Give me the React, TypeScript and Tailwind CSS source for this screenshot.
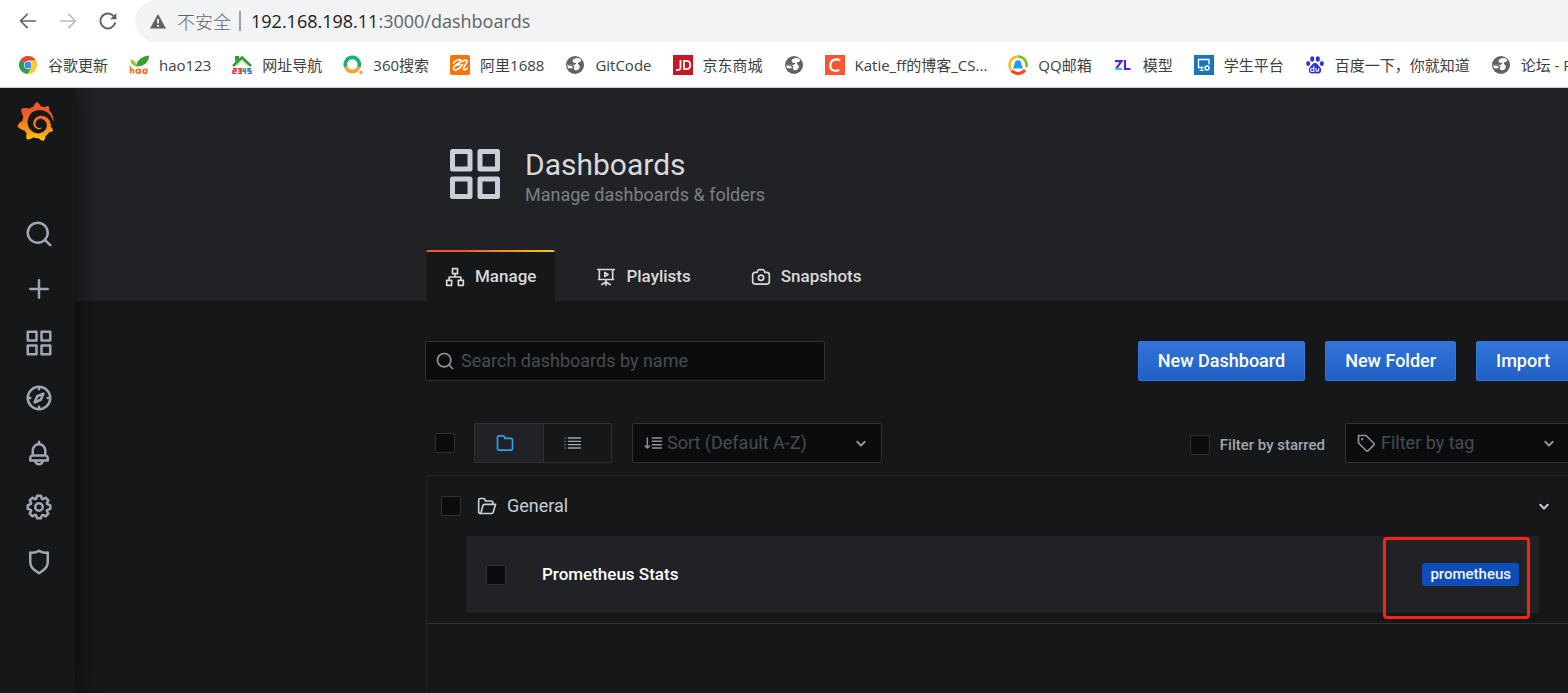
import type { ReactNode } from 'react';
import { SiGrafana } from 'react-icons/si';

type IconProps = { className?: string; children: ReactNode };

function Glyph({ className = '', children }: IconProps) {
  return (
    <svg viewBox="0 0 24 24" className={`shrink-0 ${className}`} fill="currentColor" aria-hidden="true">
      {children}
    </svg>
  );
}

function Line({ className = '', children }: IconProps) {
  return (
    <svg
      viewBox="0 0 24 24"
      className={`shrink-0 ${className}`}
      fill="none"
      stroke="currentColor"
      strokeWidth="2"
      strokeLinecap="round"
      strokeLinejoin="round"
      aria-hidden="true"
    >
      {children}
    </svg>
  );
}

const paths = {
  search:
    'M21.71,20.29,18,16.61A9,9,0,1,0,16.61,18l3.68,3.68a1,1,0,0,0,1.42,0A1,1,0,0,0,21.71,20.29ZM11,18a7,7,0,1,1,7-7A7,7,0,0,1,11,18Z',
  plus: 'M19,11H13V5a1,1,0,0,0-2,0v6H5a1,1,0,0,0,0,2h6v6a1,1,0,0,0,2,0V13h6a1,1,0,0,0,0-2Z',
  apps: 'M10,13H3a1,1,0,0,0-1,1v7a1,1,0,0,0,1,1h7a1,1,0,0,0,1-1V14A1,1,0,0,0,10,13ZM9,20H4V15H9ZM21,2H14a1,1,0,0,0-1,1v7a1,1,0,0,0,1,1h7a1,1,0,0,0,1-1V3A1,1,0,0,0,21,2ZM20,9H15V4h5Zm1,4H14a1,1,0,0,0-1,1v7a1,1,0,0,0,1,1h7a1,1,0,0,0,1-1V14A1,1,0,0,0,21,13Zm-1,7H15V15h5ZM10,2H3A1,1,0,0,0,2,3v7a1,1,0,0,0,1,1h7a1,1,0,0,0,1-1V3A1,1,0,0,0,10,2ZM9,9H4V4H9Z',
  compass:
    'M12,2A10,10,0,1,0,22,12,10,10,0,0,0,12,2Zm1,17.93V19a1,1,0,0,0-2,0v.93A8,8,0,0,1,4.07,13H5a1,1,0,0,0,0-2H4.07A8,8,0,0,1,11,4.07V5a1,1,0,0,0,2,0V4.07A8,8,0,0,1,19.93,11H19a1,1,0,0,0,0,2h.93A8,8,0,0,1,13,19.93ZM15.14,7.55l-5,2.12a1,1,0,0,0-.52.52l-2.12,5a1,1,0,0,0,.21,1.1,1,1,0,0,0,.7.29.93.93,0,0,0,.4-.08l5-2.12a1,1,0,0,0,.52-.52l2.12-5a1,1,0,0,0-1.31-1.31Zm-2.49,5.1-2.28,1,1-2.28,2.28-1Z',
  bell: 'M18,13.18V10a6,6,0,0,0-5-5.91V3a1,1,0,0,0-2,0V4.09A6,6,0,0,0,6,10v3.18A3,3,0,0,0,4,16v2a1,1,0,0,0,1,1H8.14a4,4,0,0,0,7.72,0H19a1,1,0,0,0,1-1V16A3,3,0,0,0,18,13.18ZM8,10a4,4,0,0,1,8,0v3H8Zm4,10a2,2,0,0,1-1.72-1h3.44A2,2,0,0,1,12,20Zm6-3H6V16a1,1,0,0,1,1-1H17a1,1,0,0,1,1,1Z',
  cog: 'M21.32,9.55l-1.89-.63.89-1.78A1,1,0,0,0,20.13,6L18,3.87a1,1,0,0,0-1.15-.19l-1.78.89-.63-1.89A1,1,0,0,0,13.5,2h-3a1,1,0,0,0-.95.68L8.92,4.57,7.14,3.68A1,1,0,0,0,6,3.87L3.87,6a1,1,0,0,0-.19,1.15l.89,1.78-1.89.63A1,1,0,0,0,2,10.5v3a1,1,0,0,0,.68.95l1.89.63-.89,1.78A1,1,0,0,0,3.87,18L6,20.13a1,1,0,0,0,1.15.19l1.78-.89.63,1.89a1,1,0,0,0,.95.68h3a1,1,0,0,0,.95-.68l.63-1.89,1.78.89A1,1,0,0,0,18,20.13L20.13,18a1,1,0,0,0,.19-1.15l-.89-1.78,1.89-.63A1,1,0,0,0,22,13.5v-3A1,1,0,0,0,21.32,9.55ZM20,12.78l-1.2.4A2,2,0,0,0,17.64,16l.57,1.14-1.1,1.1L16,17.64a2,2,0,0,0-2.79,1.16l-.4,1.2H11.22l-.4-1.2A2,2,0,0,0,8,17.64l-1.14.57-1.1-1.1L6.36,16A2,2,0,0,0,5.2,13.18L4,12.78V11.22l1.2-.4A2,2,0,0,0,6.36,8L5.79,6.89l1.1-1.1L8,6.36A2,2,0,0,0,10.82,5.2l.4-1.2h1.56l.4,1.2A2,2,0,0,0,16,6.36l1.14-.57,1.1,1.1L17.64,8a2,2,0,0,0,1.16,2.79l1.2.4ZM12,8a4,4,0,1,0,4,4A4,4,0,0,0,12,8Zm0,6a2,2,0,1,1,2-2A2,2,0,0,1,12,14Z',
  shield:
    'M19.63,3.65a1,1,0,0,0-.84-.2,8,8,0,0,1-6.22-1.27,1,1,0,0,0-1.14,0A8,8,0,0,1,5.21,3.45a1,1,0,0,0-.84.2A1,1,0,0,0,4,4.43v7.45a9,9,0,0,0,3.77,7.33l3.65,2.6a1,1,0,0,0,1.16,0l3.65-2.6A9,9,0,0,0,20,11.88V4.43A1,1,0,0,0,19.63,3.65ZM18,11.88a7,7,0,0,1-2.93,5.7L12,19.77,8.93,17.58A7,7,0,0,1,6,11.88V5.58a10,10,0,0,0,6-1.39,10,10,0,0,0,6,1.39Z',
  folder:
    'M19,5.5H12.72l-.32-1a3,3,0,0,0-2.84-2H5a3,3,0,0,0-3,3v13a3,3,0,0,0,3,3H19a3,3,0,0,0,3-3V8.5A3,3,0,0,0,19,5.5Zm1,13a1,1,0,0,1-1,1H5a1,1,0,0,1-1-1V5.5a1,1,0,0,1,1-1H9.56a1,1,0,0,1,.95.68l.54,1.64A1,1,0,0,0,12,7.5h7a1,1,0,0,1,1,1Z',
};

const navItems: { name: string; d: string }[] = [
  { name: 'Search', d: paths.search },
  { name: 'Create', d: paths.plus },
  { name: 'Dashboards', d: paths.apps },
  { name: 'Explore', d: paths.compass },
  { name: 'Alerting', d: paths.bell },
  { name: 'Configuration', d: paths.cog },
  { name: 'Server Admin', d: paths.shield },
];

function Favicon({ children }: { children: ReactNode }) {
  return (
    <svg viewBox="0 0 20 20" className="size-5 shrink-0" aria-hidden="true">
      {children}
    </svg>
  );
}

const globe = (
  <Favicon>
    <circle cx="10" cy="10" r="9" fill="#5f6368" />
    <path d="M11.500 3C8.500 3.500 6.800 5.500 8 7c1 1.300 2.500 1 3 .6.800 1.200-.3 2.200-2.200 2.400l-6.200-.8c-.2 1.600 0 3 .5 4 1 .3 2.500-.2 4.400.1 1.800.4 1.500 1.700 2.900 2 2.500.4 4.800-1.800 4.400-4-.3-1.800-2.300-2-2-3.300.2-1 1.800-.8 2.700-1.600.6-.6.700-1.300.4-2C15 3.500 13.300 2.900 11.500 3z" fill="#fff" />
    <path d="M3 9.700c2 0 4 .3 5.200 1.600.8 1 .3 2-.8 2.300" fill="none" stroke="#5f6368" strokeWidth="1.600" />
  </Favicon>
);

const chrome = (
  <Favicon>
    <circle cx="10" cy="10" r="9" fill="#fbc934" />
    <path d="M10 10 2.200 5.500A9 9 0 0 1 17.800 5.500H10z" fill="#e5483b" />
    <path d="M10 10 2.200 5.500A9 9 0 0 0 9.500 19l4.400-6.800z" fill="#2a9d56" />
    <path d="M10 5.600h7.800A9 9 0 0 1 9.500 19l4.300-6.700z" fill="#fbc934" />
    <circle cx="10" cy="10" r="4.200" fill="#fff" />
    <circle cx="10" cy="10" r="3.500" fill="#4a84ee" />
  </Favicon>
);

const hao = (
  <Favicon>
    <path d="M7 11.500C7.500 6 12 1.500 20 .5c0 6.500-4.500 11-13 11z" fill="#3f9c35" />
    <path d="M7 11.500C3.500 10.500 1.500 8 1.500 4.500 5 5 7.500 7 7 11.500z" fill="#a4c520" />
    <path d="M1.500 11.500v7M1.500 15.500c1-1.200 3-1.200 3 .5v2.500M11 14v4.500" fill="none" stroke="#f4712c" strokeWidth="1.700" />
    <circle cx="9" cy="16.300" r="1.900" fill="none" stroke="#f4712c" strokeWidth="1.600" />
    <circle cx="16" cy="16.300" r="2" fill="none" stroke="#f4712c" strokeWidth="1.700" />
  </Favicon>
);

const nav2345 = (
  <Favicon>
    <path d="M1 11 10 2.500 19 11" fill="none" stroke="#2f9e2f" strokeWidth="2.600" />
    <path d="M4 11 10 5.500 16 11" fill="none" stroke="#bfe3b0" strokeWidth="1.200" />
    <path d="M3 1h4v3L3 7z" fill="#2f9e2f" />
    <path d="M.8 13.800H4v2.200H1v2.400h3.500" fill="none" stroke="#e0252b" strokeWidth="1.400" />
    <path d="M6 13.800h3v4.600H6M6.500 16H9" fill="none" stroke="#e0252b" strokeWidth="1.400" />
    <path d="M11.200 13v3.300h3.200M13.300 13v6" fill="none" stroke="#28a745" strokeWidth="1.400" />
    <path d="M19 13.800h-3V16h3v2.400h-3.300" fill="none" stroke="#2673d8" strokeWidth="1.400" />
  </Favicon>
);

const so360 = (
  <Favicon>
    <path d="M2.800 12A7 7 0 1 1 15.800 12" fill="none" stroke="#19b26b" strokeWidth="3.600" />
    <path d="M2.800 12A7 7 0 0 0 15.800 12" fill="none" stroke="#f9a13a" strokeWidth="3.600" />
    <circle cx="18" cy="17.500" r="1.700" fill="#f9a13a" />
  </Favicon>
);

const ali = (
  <Favicon>
    <rect width="20" height="20" rx="2" fill="#ff7300" />
    <path
      d="M3.500 8C6 4.500 11 3.500 10.800 6 10.600 8.500 4 9 3.500 13c-.3 3.700 5.500 2 9-3.500M6 10.300c1.500 0 3-.3 4-1M12 6.500c2.500-2 5.500-2 4.800.5-.6 2.200-4 5.500-3.300 7.200.5 1.200 2.500.3 3.800-.8"
      fill="none"
      stroke="#fff"
      strokeWidth="1.700"
      strokeLinecap="round"
    />
  </Favicon>
);

const jd = (
  <Favicon>
    <rect width="20" height="20" fill="#c81623" />
    <path d="M7.500 5v8c0 1.800-1.800 2.200-4.500 2M11 5.800h2.500c5 0 5 8.400 0 8.400H11z" fill="none" stroke="#fff" strokeWidth="1.800" />
  </Favicon>
);

const csdn = (
  <Favicon>
    <rect width="20" height="20" fill="#fc5531" />
    <path d="M15.200 5.200C9.500 2.800 5.800 5.500 5.300 10c-.4 5 3.500 7 9 5" fill="none" stroke="#fff" strokeWidth="2.200" />
  </Favicon>
);

const qqmail = (
  <Favicon>
    <path d="M3 15A8.500 8.500 0 0 1 9 1.700" fill="none" stroke="#fdb913" strokeWidth="2.400" />
    <path d="M9.500 1.500A8.500 8.500 0 0 1 18.300 12" fill="none" stroke="#6fbe22" strokeWidth="2.600" />
    <path d="M3.500 15.500c3.500 4 10 4 13.500-.5" fill="none" stroke="#f4481e" strokeWidth="3" />
    <path d="M10 5.200c2.300 0 3.400 1.700 3.400 3.700 0 1.400 1.300 2.400 1.300 4.600H5.300c0-2.200 1.300-3.200 1.300-4.600 0-2 1.100-3.700 3.400-3.700z" fill="#1e9be9" />
  </Favicon>
);

const zl = (
  <Favicon>
    <path d="M2 6.200h6.500L3 13.800" fill="none" stroke="#5b21d6" strokeWidth="2.200" />
    <path d="M2.500 14h6.500" stroke="#19d3c5" strokeWidth="2.200" />
    <path d="M12 5v9h5.500" fill="none" stroke="#5b21d6" strokeWidth="2.200" />
  </Favicon>
);

const student = (
  <Favicon>
    <rect width="20" height="20" fill="#1b75bb" />
    <path d="M9.500 12.500H4.500v-8h10.500v5" fill="none" stroke="#fff" strokeWidth="1.300" />
    <path d="M5.500 15.500h4.500M7.700 12.500v3" stroke="#fff" strokeWidth="1.200" />
    <circle cx="13" cy="13" r="2" fill="none" stroke="#fff" strokeWidth="1.400" />
  </Favicon>
);

const baidu = (
  <Favicon>
    <g fill="#2932e1">
      <ellipse cx="7.200" cy="4" rx="2" ry="2.800" />
      <ellipse cx="12.800" cy="4" rx="2" ry="2.800" />
      <ellipse cx="3.200" cy="8.500" rx="2" ry="2.500" />
      <ellipse cx="16.800" cy="8.500" rx="2" ry="2.500" />
      <path d="M10 8c2.300 0 3 2.200 4.600 3.700 2.600 2.300 1.900 6.800-1.300 6.800-1.200 0-2-.3-3.300-.3s-2.100.3-3.300.3c-3.200 0-3.900-4.500-1.300-6.800C7 10.200 7.700 8 10 8z" />
    </g>
    <path d="M8.800 11v5.500H7a1.300 1.300 0 0 1 0-3h1.800M11 13v2.200c0 1.300 2.700 1.300 2.700 0V13" fill="none" stroke="#fff" strokeWidth="1.100" />
  </Favicon>
);

const bookmarks: { label: string; icon: ReactNode }[] = [
  { label: '谷歌更新', icon: chrome },
  { label: 'hao123', icon: hao },
  { label: '网址导航', icon: nav2345 },
  { label: '360搜索', icon: so360 },
  { label: '阿里1688', icon: ali },
  { label: 'GitCode', icon: globe },
  { label: '京东商城', icon: jd },
  { label: '', icon: globe },
  { label: 'Katie_ff的博客_CS...', icon: csdn },
  { label: 'QQ邮箱', icon: qqmail },
  { label: '模型', icon: zl },
  { label: '学生平台', icon: student },
  { label: '百度一下，你就知道', icon: baidu },
  { label: '论坛 - P', icon: globe },
];

function BrowserBar() {
  return (
    <header className="relative z-20 border-b border-[#c8cacd] bg-white font-['Open_Sans','Noto_Sans_CJK_SC',sans-serif]">
      <div className="flex h-[43px] items-start">
        <div className="flex h-[42px] w-[135px] shrink-0 items-center gap-5 pl-[18px] text-[#5f6368]">
          <button type="button" aria-label="Back" className="size-5">
            <Line className="size-5"><path d="M21 12H3M11 4l-8 8 8 8" /></Line>
          </button>
          <button type="button" aria-label="Forward" className="size-5 text-[#babcbe]">
            <Line className="size-5"><path d="M3 12h18M13 4l8 8-8 8" /></Line>
          </button>
          <button type="button" aria-label="Reload" className="size-5">
            <Line className="size-5">
              <path d="M20.500 14.500A9 9 0 1 1 18.500 5.800L21 8.500" strokeWidth="2.400" />
              <path d="M22 2.500V10h-7.500z" fill="currentColor" stroke="none" />
            </Line>
          </button>
        </div>
        <div className="flex h-[42px] min-w-0 grow items-center rounded-l-full bg-[#f1f3f4] pl-[14px] text-lg text-[#5f6368]">
          <svg viewBox="0 0 18 18" className="size-[18px] shrink-0" aria-hidden="true">
            <path d="M9 2 17 16.500H1z" fill="#5f6368" />
            <path d="M9 7v4.500M9 13v1.800" stroke="#fff" strokeWidth="1.700" />
          </svg>
          <span className="ml-[10px] whitespace-nowrap font-['Noto_Sans_CJK_SC',sans-serif] font-light">不安全</span>
          <span className="ml-2 h-5 w-0.5 bg-[#9fa2a5]" />
          <span className="ml-[10px] whitespace-nowrap">
            <span className="text-[#202124]">192.168.198.11</span>:3000/dashboards
          </span>
        </div>
      </div>
      <nav aria-label="Bookmarks" className="flex h-11 items-center gap-[21px] overflow-hidden pl-[18px] text-[15px] text-[#3c4043]">
        {bookmarks.map(({ label, icon }, i) => (
          <a key={i} href="#" aria-label={label || 'Bookmark'} className="flex shrink-0 items-center gap-[10px] whitespace-nowrap">
            {icon}
            {label && <span>{label}</span>}
          </a>
        ))}
      </nav>
    </header>
  );
}

function Sidebar() {
  return (
    <aside className="relative z-10 flex w-[75px] shrink-0 flex-col items-center bg-[#161719] shadow-[0_0_20px_#0b0c0e]">
      <svg width="0" height="0" className="absolute" aria-hidden="true">
        <defs>
          <linearGradient id="logo-fill" x1="0" y1="1" x2="0" y2="0">
            <stop offset="0" stopColor="#fcc70a" />
            <stop offset="0.700" stopColor="#f05a28" />
          </linearGradient>
        </defs>
      </svg>
      <a href="#" aria-label="Grafana" className="mt-[14px] mr-1 block">
        <SiGrafana className="size-[39px]" fill="url(#logo-fill)" stroke="none" />
      </a>
      <nav aria-label="Main" className="mt-[66px] ml-[3px] grid h-[382px] grid-rows-7 text-[#9fa7b3]">
        {navItems.map(({ name, d }) => (
          <a key={name} href="#" aria-label={name} className="flex items-center justify-center">
            <Glyph className="size-[30px]"><path d={d} /></Glyph>
          </a>
        ))}
      </nav>
    </aside>
  );
}

function Checkbox({ label }: { label: string }) {
  return (
    <input
      type="checkbox"
      aria-label={label}
      className="size-5 shrink-0 appearance-none rounded-[2px] border border-[#2c3235] bg-[#0b0c0e]"
    />
  );
}

function Chevron({ className }: { className: string }) {
  return (
    <Line className={className}>
      <path d="M7.500 10.500l4.500 4.500 4.500-4.500" strokeWidth="2.400" />
    </Line>
  );
}

const tabs: { label: string; icon: ReactNode; active?: boolean }[] = [
  {
    label: 'Manage',
    active: true,
    icon: (
      <Line className="size-5">
        <path d="M9 2h6v6H9zM2 16h6v6H2zM16 16h6v6h-6zM12 8v4M5 16v-4h14v4" />
      </Line>
    ),
  },
  {
    label: 'Playlists',
    icon: (
      <Line className="size-5">
        <path d="M2 3h20M4 3v12h16V3M12 15v7M12 18l-5 3M12 18l5 3M3 15h18" />
        <path d="M10.500 6.500v5l4-2.500z" strokeWidth="1.800" />
      </Line>
    ),
  },
  {
    label: 'Snapshots',
    icon: (
      <Line className="size-5">
        <path d="M19 6.500h-2.300l-.7-2a2 2 0 0 0-1.900-1.400H9.900A2 2 0 0 0 8 4.500l-.7 2H5a3 3 0 0 0-3 3v8a3 3 0 0 0 3 3h14a3 3 0 0 0 3-3v-8a3 3 0 0 0-3-3z" />
        <circle cx="12" cy="13" r="3.200" />
      </Line>
    ),
  },
];

function PageHeader() {
  return (
    <div className="bg-[#202226] pl-[350px]">
      <div className="flex h-[162px] items-center gap-5 pt-10 pb-[30px] pl-5">
        <Glyph className="size-[60px] text-[#c7d0d9]"><path d={paths.apps} /></Glyph>
        <div className="pt-1.5">
          <h1 className="text-[30px] leading-9 text-[#d8d9da]">Dashboards</h1>
          <p className="text-lg leading-6 text-[#7b8087]">Manage dashboards &amp; folders</p>
        </div>
      </div>
      <nav aria-label="Dashboard sections" className="ml-px flex h-[51px] gap-[22px]">
        {tabs.map(({ label, icon, active }) => (
          <a
            key={label}
            href="#"
            className={`flex flex-col overflow-hidden rounded-t-[3px] text-[17px] font-medium text-[#d8d9da] ${active ? 'bg-[#161719]' : ''}`}
          >
            <span className={`h-0.5 ${active ? 'bg-linear-to-r from-[#f05a28] from-30% to-[#fbca0a]' : ''}`} />
            <span className="flex grow items-center gap-[10px] px-[19px]">
              {icon}
              {label}
            </span>
          </a>
        ))}
      </nav>
    </div>
  );
}

const buttons = ['New Dashboard', 'New Folder', 'Import'];

function Actions() {
  return (
    <div className="flex items-center gap-5">
      <div className="flex h-10 w-[400px] items-center rounded-[2px] border border-[#2c3235] bg-[#0b0c0e] pl-[9px]">
        <Glyph className="size-5 text-[#8e9299]"><path d={paths.search} /></Glyph>
        <input
          type="text"
          aria-label="Search dashboards by name"
          placeholder="Search dashboards by name"
          className="min-w-0 grow bg-transparent pl-1.5 text-lg text-[#c7d0d9] outline-none placeholder:text-[#464c54]"
        />
      </div>
      <div className="grow" />
      {buttons.map((label) => (
        <button
          key={label}
          type="button"
          className="h-10 shrink-0 rounded-[2px] border border-[#3274d9] bg-linear-to-b from-[#3274d9] to-[#1f60c4] px-[19px] text-lg font-medium whitespace-nowrap text-white"
        >
          {label}
        </button>
      ))}
    </div>
  );
}

function Filters() {
  return (
    <div className="mt-[42px] flex h-10 items-center gap-[19px]">
      <div className="flex w-[30px] justify-end">
        <Checkbox label="Select all" />
      </div>
      <div role="radiogroup" aria-label="View" className="flex h-10 w-[138px] rounded-[2px] border border-[#2c3235]">
        <label className="flex flex-1 items-center justify-center border-r border-[#2c3235] bg-[#202226] pr-2 text-[#33a2e5]">
          <input type="radio" name="view" aria-label="Folders" defaultChecked className="sr-only" />
          <Glyph className="size-5"><path d={paths.folder} /></Glyph>
        </label>
        <label className="flex flex-1 items-center justify-center pr-2 text-[#9fa7b3]">
          <input type="radio" name="view" aria-label="List" className="sr-only" />
          <Line className="size-5"><path d="M6.500 6H21M6.500 10H21M6.500 14H21M6.500 18H21M2.500 6h.01M2.500 10h.01M2.500 14h.01M2.500 18h.01" strokeWidth="1.600" /></Line>
        </label>
      </div>
      <div className="ml-px flex h-10 w-[250px] items-center rounded-[2px] border border-[#2c3235] bg-[#0b0c0e] pr-[10px] pl-[11px] text-[#8e9299]">
        <Line className="size-5"><path d="M4 6v12M1.500 15.500L4 18l2.500-2.500M10 6h11M10 10h11M10 14h11M10 18h11" strokeWidth="1.800" /></Line>
        <select aria-label="Sort" className="min-w-0 grow appearance-none bg-transparent pl-[3px] text-lg text-[#464c54] outline-none">
          <option>Sort (Default A-Z)</option>
        </select>
        <Chevron className="size-5" />
      </div>
      <div className="grow" />
      <label className="flex items-center gap-[10px] pt-1 text-[15px] font-medium text-[#9fa7b3]">
        <Checkbox label="Filter by starred" />
        Filter by starred
      </label>
      <div className="ml-px flex h-10 w-[225px] items-center rounded-[2px] border border-[#2c3235] bg-[#0b0c0e] px-[10px] text-[#8e9299]">
        <Line className="size-5">
          <path d="M3 3h9l9.300 9.300a1.500 1.500 0 0 1 0 2.200l-6.800 6.800a1.500 1.500 0 0 1-2.200 0L3 12z" />
          <circle cx="7.500" cy="7.500" r="0.700" fill="currentColor" strokeWidth="1.400" />
        </Line>
        <select aria-label="Filter by tag" className="min-w-0 grow appearance-none bg-transparent pl-[5px] text-lg text-[#464c54] outline-none">
          <option>Filter by tag</option>
        </select>
        <Chevron className="size-5" />
      </div>
    </div>
  );
}

function Results() {
  return (
    <section className="mt-3 ml-px grow rounded-tl-[3px] border-t border-l border-[#202226]">
      <div className="border-b border-[#2c3235] pb-[10px]">
        <div className="flex h-[60px] items-center pr-4 pl-[14px]">
          <Checkbox label="Select folder General" />
          <Line className="ml-4 size-5 text-[#c7d0d9]">
            <path d="M4 21a2 2 0 0 1-2-2V5a2 2 0 0 1 2-2h4.500l2 3H17a2 2 0 0 1 2 2v2" />
            <path d="M4 21h13.500a2 2 0 0 0 1.900-1.400L22.300 10H9a2 2 0 0 0-1.900 1.400L4.800 20" />
          </Line>
          <h2 className="ml-[10px] grow text-lg text-[#c7d0d9]">General</h2>
          <button type="button" aria-label="Collapse General" className="text-[#c7d0d9]">
            <Chevron className="size-5" />
          </button>
        </div>
        <div className="relative mr-[31px] ml-[39px] flex h-[77px] items-center rounded-[2px] bg-[#202226] px-5">
          <Checkbox label="Select Prometheus Stats" />
          <a href="#" className="ml-9 grow text-[17px] font-medium text-white">Prometheus Stats</a>
          <span className="rounded-[3px] bg-[#0f4db8] px-2 text-[15px] leading-[23px] font-medium text-[#f0f4fd]">prometheus</span>
          <span className="pointer-events-none absolute top-px right-[9px] h-[82px] w-[147px] rounded-[4px] border-3 border-[#ff2015]" />
        </div>
      </div>
    </section>
  );
}

export default function App() {
  return (
    <div className="flex min-h-screen flex-col overflow-hidden bg-[#161719]">
      <BrowserBar />
      <div className="flex grow font-[Roboto,sans-serif]">
        <Sidebar />
        <main className="flex min-w-0 grow flex-col">
          <PageHeader />
          <div className="-mr-0.5 flex grow flex-col pt-10 pl-[350px]">
            <Actions />
            <Filters />
            <Results />
          </div>
        </main>
      </div>
    </div>
  );
}
